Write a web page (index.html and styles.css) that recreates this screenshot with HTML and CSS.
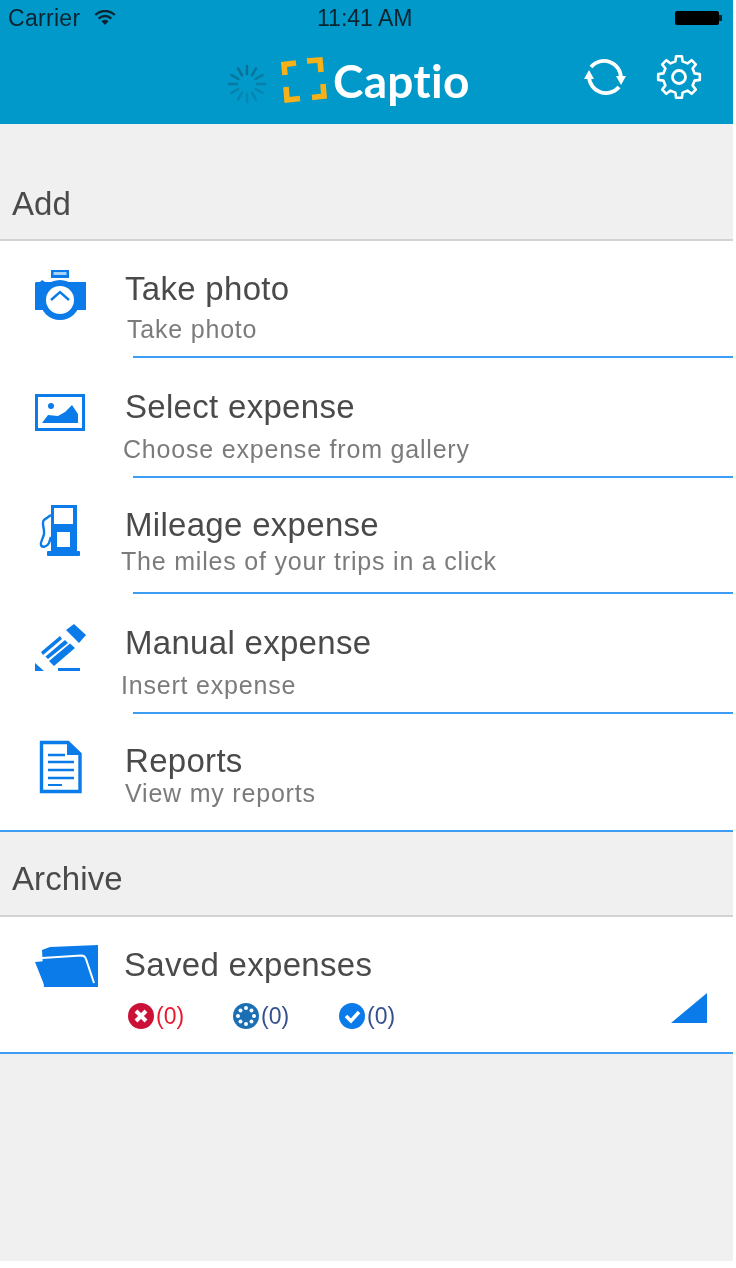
FILE: index.html
```html
<!DOCTYPE html>
<html lang="en">
<head>
<meta charset="utf-8">
<title>Captio</title>
<link rel="stylesheet" href="styles.css">
</head>
<body>
<main class="app">
  <header class="header">
    <div class="status">
      <div class="status-left">
        <span>Carrier</span>
        <svg class="wifi" viewBox="0 0 24 16" width="24" height="16"><path d="M12 15 8.500 11.200a5 5 0 0 1 7 0Z" fill="#0b2530"/><path d="M5.700 8.600a9 9 0 0 1 12.600 0M2.200 5A14 14 0 0 1 21.800 5" fill="none" stroke="#0b2530" stroke-width="2.400"/></svg>
      </div>
      <span class="clock">11:41 AM</span>
      <div class="battery"><span class="battery-body"></span><span class="battery-tip"></span></div>
    </div>
    <div class="nav">
      <svg class="spinner" viewBox="-20 -20 40 40" width="40" height="40">
        <g stroke="#0b6f96" stroke-width="2.400" stroke-linecap="round">
          <line y1="-10" y2="-18"/><line y1="-10" y2="-18" transform="rotate(30)" stroke-opacity=".9"/><line y1="-10" y2="-18" transform="rotate(60)" stroke-opacity=".75"/><line y1="-10" y2="-18" transform="rotate(90)" stroke-opacity=".6"/><line y1="-10" y2="-18" transform="rotate(120)" stroke-opacity=".5"/><line y1="-10" y2="-18" transform="rotate(150)" stroke-opacity=".45"/><line y1="-10" y2="-18" transform="rotate(180)" stroke-opacity=".45"/><line y1="-10" y2="-18" transform="rotate(210)" stroke-opacity=".5"/><line y1="-10" y2="-18" transform="rotate(240)" stroke-opacity=".6"/><line y1="-10" y2="-18" transform="rotate(270)" stroke-opacity=".75"/><line y1="-10" y2="-18" transform="rotate(300)" stroke-opacity=".9"/><line y1="-10" y2="-18" transform="rotate(330)"/>
        </g>
      </svg>
      <svg class="brackets" viewBox="0 0 48 50" width="48" height="50"><g fill="none" stroke="#f6b119" stroke-width="5.600"><path d="M16 8 4 9.500 5 20"/><path d="M27 6 40 5 41 17"/><path d="M6 32 7 45 20 43.500"/><path d="M43 29 44 41 32 42.500"/></g></svg>
      <span class="brand">Captio</span>
      <svg class="refresh" viewBox="0 0 44 44" width="44" height="44"><g fill="none" stroke="#fff" stroke-width="3.800"><path d="M6 22A17 17 0 0 0 36 32"/><path d="M38 23A17 17 0 0 0 8 12"/></g><path d="M6 15 1 24H11ZM38 30 33 21H43Z" fill="#fff"/></svg>
      <svg class="gear" viewBox="-23 -23 46 46" width="46" height="46"><path d="M-3.600-15.600-2.900-20.800 2.900-20.800 3.600-15.600 8.500-13.600 12.600-16.800 16.800-12.600 13.600-8.500 15.600-3.600 20.800-2.900 20.800 2.900 15.600 3.600 13.600 8.500 16.800 12.600 12.600 16.800 8.500 13.600 3.600 15.600 2.900 20.800-2.900 20.800-3.600 15.600-8.500 13.600-12.600 16.800-16.800 12.600-13.600 8.500-15.600 3.600-20.800 2.900-20.800-2.900-15.600-3.600-13.600-8.500-16.800-12.600-12.600-16.800-8.500-13.600Z" fill="none" stroke="#fff" stroke-width="2.600" stroke-linejoin="round"/><circle r="6.500" fill="none" stroke="#fff" stroke-width="2.800"/></svg>
    </div>
  </header>

  <h2 class="section section-add">Add</h2>

  <ul class="list">
    <li class="row row-photo">
      <svg class="icon" viewBox="0 0 60 60" width="60" height="60"><path d="M21 0H39V8H21ZM6 12h4l2-2 3 2H56V40H42A19 19 0 0 1 18 40H5V13Z" fill="#0a7be8"/><rect x="23.500" y="2" width="13" height="3" fill="#a9d2f8"/><circle cx="30" cy="30" r="20" fill="#0a7be8"/><circle cx="30" cy="30" r="14" fill="#fff"/><path d="M21 30 30 22l9 8" fill="none" stroke="#0a7be8" stroke-width="2.400"/></svg>
      <div class="text"><h3 class="title">Take photo</h3><p class="sub sub-photo">Take photo</p></div>
    </li>
    <li class="row row-select">
      <svg class="icon" viewBox="0 0 60 60" width="60" height="60"><rect x="6.500" y="12.500" width="47" height="34" fill="none" stroke="#0a7be8" stroke-width="3"/><circle cx="21" cy="23" r="3" fill="#0a7be8"/><path d="M12 40 18 32 28 33 35 29 42 22 48 31V40Z" fill="#0a7be8"/></svg>
      <div class="text"><h3 class="title">Select expense</h3><p class="sub sub-select">Choose expense from gallery</p></div>
    </li>
    <li class="row row-mileage">
      <svg class="icon" viewBox="0 0 60 60" width="60" height="60"><path fill-rule="evenodd" d="M21 5H47V51H21ZM24 8V24H43V8ZM27 32V47H40V32Z" fill="#0a7be8"/><rect x="17" y="51" width="33" height="5" rx="1" fill="#0a7be8"/><path d="M21 15 14 20c-3 3 1 9 0 14s-4 8-3 11c1 3 6 2 8-2l2-6" fill="none" stroke="#0a7be8" stroke-width="2.400"/></svg>
      <div class="text"><h3 class="title">Mileage expense</h3><p class="sub sub-mileage">The miles of your trips in a click</p></div>
    </li>
    <li class="row row-manual">
      <svg class="icon" viewBox="0 0 60 60" width="60" height="60"><path d="M36 9 44 3 56 14 49 22Z" fill="#0a7be8"/><path d="M30 15 32 18 13 34 11 31ZM35 19 38 22 18 38 15.500 35.500ZM40 22.500 45 27 24 45 19 40Z" fill="#0a7be8"/><path d="M5 42 14 50H5Z" fill="#0a7be8"/><rect x="28" y="47" width="22" height="3" fill="#0a7be8"/></svg>
      <div class="text"><h3 class="title">Manual expense</h3><p class="sub sub-manual">Insert expense</p></div>
    </li>
    <li class="row row-reports">
      <svg class="icon" viewBox="0 0 60 60" width="60" height="60"><path d="M11.500 4.500H38L50 16V53.500H11.500Z" fill="none" stroke="#0a7be8" stroke-width="3.400"/><path d="M37 3 51 17H37Z" fill="#0a7be8"/><path d="M18 17H35M18 24H44M18 32H44M18 40H44" stroke="#0a7be8" stroke-width="2.400"/><path d="M18 47H32" stroke="#0a7be8" stroke-width="2"/></svg>
      <div class="text"><h3 class="title">Reports</h3><p class="sub sub-reports">View my reports</p></div>
    </li>
  </ul>

  <h2 class="section section-archive">Archive</h2>

  <div class="saved">
    <svg class="folder" viewBox="0 0 66 46" width="66" height="46"><path d="M8 6 16 3 64 1V43H10Z" fill="#0a7be8"/><path d="M8 14 47 11.500Q51 11.500 52 15L60 39" fill="none" stroke="#fff" stroke-width="2"/><path d="M1 18 46 14Q49 14 50 17L57 39 64 43H11Z" fill="#0a7be8"/></svg>
    <div class="saved-main">
      <h3 class="title">Saved expenses</h3>
      <div class="counts">
        <div class="count count-red">
          <svg class="badge" viewBox="0 0 26 26" width="26" height="26"><circle cx="13" cy="13" r="13" fill="#cc1138"/><path d="M8 8 18 18M18 8 8 18" stroke="#fff" stroke-width="4"/></svg>
          <span>(0)</span>
        </div>
        <div class="count count-blue">
          <svg class="badge" viewBox="0 0 26 26" width="26" height="26"><circle cx="13" cy="13" r="13" fill="#1a6fb5"/><g fill="#fff"><circle cx="13" cy="5" r="2"/><circle cx="13" cy="21" r="2"/><circle cx="5" cy="13" r="2"/><circle cx="21" cy="13" r="2"/><circle cx="7.500" cy="7.500" r="2"/><circle cx="18.500" cy="7.500" r="2"/><circle cx="7.500" cy="18.500" r="2"/><circle cx="18.500" cy="18.500" r="2"/></g></svg>
          <span>(0)</span>
        </div>
        <div class="count count-check">
          <svg class="badge" viewBox="0 0 26 26" width="26" height="26"><circle cx="13" cy="13" r="13" fill="#0a7be8"/><path d="M7 13 12 18 20 9" fill="none" stroke="#fff" stroke-width="3.600"/></svg>
          <span>(0)</span>
        </div>
      </div>
    </div>
    <svg class="corner" viewBox="0 0 36 30" width="36" height="30"><path d="M36 0V30H0Z" fill="#0a7be8"/></svg>
  </div>
  <div class="footer"></div>
</main>
</body>
</html>
```
FILE: styles.css
```css
* { box-sizing: border-box; }
html, body { margin: 0; padding: 0; background: #fff; }
body { font-family: "Liberation Sans", Arial, sans-serif; overflow: hidden; height: 1268px; }
svg { display: block; flex: none; }
.app { width: 733px; height: 1261px; background: #f0f0f0; display: flex; flex-direction: column; filter: blur(.7px); }
.header { height: 124px; background: #0099c9; flex: none; }
.status { height: 38px; padding: 0 11px 2px 8px; display: flex; align-items: center; font-size: 23px; letter-spacing: .3px; color: #0b2530; white-space: nowrap; }
.status-left { width: 240px; display: flex; align-items: center; gap: 13px; }
.clock { margin-left: 69px; letter-spacing: 0; }
.battery { display: flex; align-items: center; margin-left: auto; }
.battery-body { width: 44px; height: 14px; background: #000; border-radius: 2px; }
.battery-tip { width: 3px; height: 6px; background: #0b2530; }
.nav { height: 86px; display: flex; align-items: flex-start; padding-left: 227px; }
.spinner { margin-top: 26px; }
.brackets { margin: 17px 0 0 13px; }
.brand { font-family: Lato, "Liberation Sans", sans-serif; font-weight: 700; font-size: 46px; line-height: 50px; letter-spacing: .3px; font-variant-ligatures: none; color: #fff; margin: 18px 0 0 5px; width: 136px; }
.refresh { margin: 17px 0 0 114px; }
.gear { margin: 16px 0 0 29px; }
.section { margin: 0; font-weight: 400; color: #4a4a4a; font-size: 33px; line-height: 36px; letter-spacing: .1px; padding-left: 12px; border-bottom: 2px solid #d3d3d3; flex: none; }
.section-add { height: 117px; padding-top: 62px; }
.section-archive { height: 85px; padding-top: 29px; }
.list { list-style: none; margin: 0; padding: 0; background: #fff; flex: none; }
.row { display: flex; align-items: flex-start; padding-left: 30px; position: relative; border-bottom: 2px solid transparent; }
.row::after { content: ""; position: absolute; left: 133px; right: 0; bottom: -2px; height: 2px; background: #3d9df0; }
.row-photo { height: 117px; }
.row-select { height: 120px; }
.row-mileage { height: 116px; }
.row-manual { height: 120px; }
.row-reports { height: 118px; }
.row-reports::after { left: 0; }
.row-photo .icon { margin-top: 29px; }
.row-select .icon { margin-top: 25px; }
.row-mileage .icon { margin-top: 22px; }
.row-manual .icon { margin-top: 27px; }
.row-reports .icon { margin-top: 24px; }
.text { margin-left: 35px; }
.title { margin: 0; font-weight: 400; font-size: 33px; line-height: 38px; letter-spacing: .3px; color: #4a4a4a; white-space: nowrap; }
.row-photo .text { padding-top: 29px; }
.row-select .text { padding-top: 30px; }
.row-mileage .text { padding-top: 28px; }
.row-manual .text { padding-top: 30px; }
.row-reports .text { padding-top: 28px; }
.sub { margin: 0; font-size: 25px; line-height: 30px; letter-spacing: .8px; color: #7b7b7b; white-space: nowrap; }
.sub-photo { margin: 6px 0 0 2px; }
.sub-select { margin: 8px 0 0 -2px; }
.sub-mileage { margin: 2px 0 0 -4px; }
.sub-manual { margin: 8px 0 0 -4px; }
.sub-reports { margin: -2px 0 0 0; }
.saved { height: 137px; background: #fff; border-bottom: 2px solid #3d9df0; display: flex; align-items: flex-start; padding-left: 34px; flex: none; }
.folder { margin-top: 27px; }
.saved-main { margin-left: 24px; padding-top: 29px; width: 547px; }
.counts { display: flex; margin: 19px 0 0 4px; }
.count { display: flex; align-items: center; font-size: 23px; line-height: 26px; gap: 2px; }
.count-red { color: #e8182f; width: 105px; }
.count-blue { color: #34508f; width: 106px; }
.count-check { color: #34508f; }
.corner { margin-top: 76px; }
.footer { flex: 1; }
```
